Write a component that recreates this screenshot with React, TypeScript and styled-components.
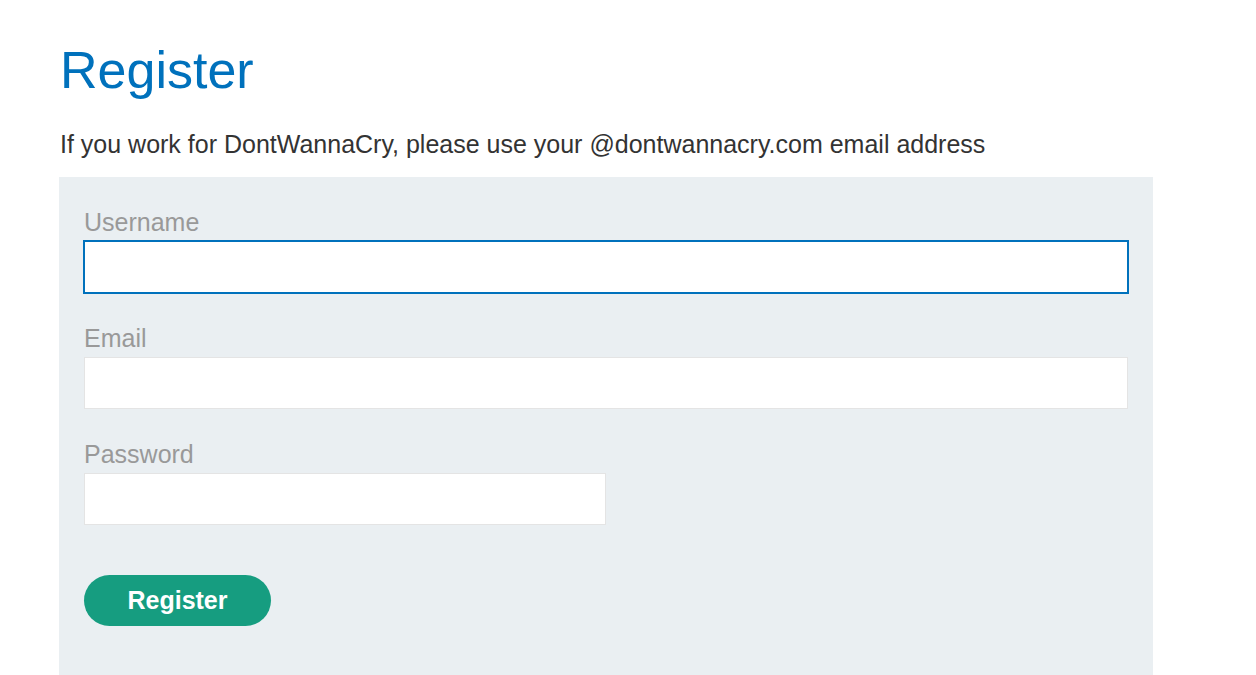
import React from "react";
import styled, { createGlobalStyle } from "styled-components";

const Global = createGlobalStyle`
  html, body { margin: 0; padding: 0; background: #fff; }
  body { font-family: "Liberation Sans", Arial, sans-serif; color: #333; }
  * { box-sizing: border-box; }
`;

const Page = styled.main`
  padding: 38px 0 0 59px;
  width: 1153px;
`;

const Title = styled.h1`
  margin: 0 0 0 1px;
  font-size: 52px;
  line-height: 64px;
  font-weight: 400;
  color: #0071bc;
`;

const Intro = styled.p`
  margin: 27px 0 18px 1px;
  font-size: 25px;
  line-height: 30px;
`;

const Panel = styled.form`
  background: #eaeff2;
  padding: 31px 25px 48px;
  display: flex;
  flex-direction: column;
  min-height: 520px;
`;

const Field = styled.div`
  display: flex;
  flex-direction: column;
  margin-bottom: 31px;
`;

const Label = styled.label`
  font-size: 25px;
  line-height: 29px;
  color: #999;
  margin-bottom: 4px;
`;

const Input = styled.input<{ $focused?: boolean; $narrow?: boolean }>`
  height: 52px;
  width: ${(p) => (p.$narrow ? "522px" : "100%")};
  background: #fff;
  border: 1px solid ${(p) => (p.$focused ? "#0071bc" : "#e4e4e4")};
  box-shadow: ${(p) => (p.$focused ? "0 0 0 1px #0071bc" : "none")};
  outline: none;
  font-size: 20px;
  padding: 0 12px;
  font-family: inherit;
`;

const Button = styled.button`
  margin-top: 19px;
  align-self: flex-start;
  width: 187px;
  height: 51px;
  border: none;
  border-radius: 26px;
  background: #169d80;
  color: #fff;
  font-family: "Liberation Sans", Arial, sans-serif;
  font-weight: 700;
  font-size: 25px;
  cursor: pointer;
`;

export default function App() {
  return (
    <>
      <Global />
      <Page>
        <Title>Register</Title>
        <Intro>If you work for DontWannaCry, please use your @dontwannacry.com email address</Intro>
        <Panel onSubmit={(e) => e.preventDefault()}>
          <Field>
            <Label htmlFor="username">Username</Label>
            <Input id="username" $focused />
          </Field>
          <Field>
            <Label htmlFor="email">Email</Label>
            <Input id="email" />
          </Field>
          <Field>
            <Label htmlFor="password">Password</Label>
            <Input id="password" type="password" $narrow />
          </Field>
          <Button type="submit">Register</Button>
        </Panel>
      </Page>
    </>
  );
}
